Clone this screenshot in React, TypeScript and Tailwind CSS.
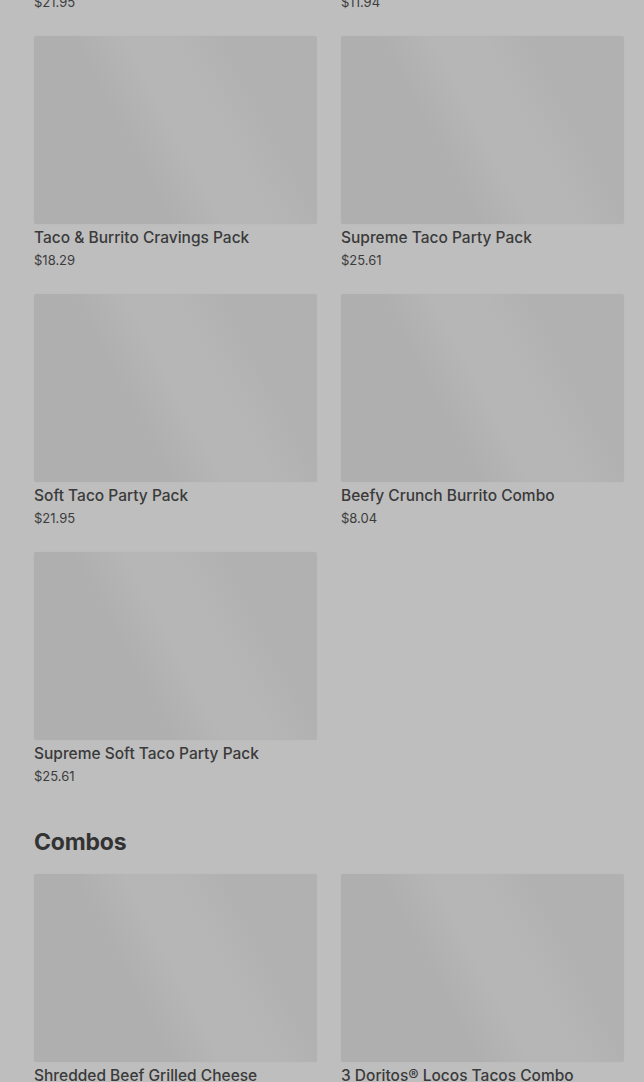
import React from "react";

type Item = { name: string; price: string };

const Skeleton = () => (
  <div className="h-[188px] w-full rounded-[2px] bg-[linear-gradient(62deg,#afafaf_0%,#afafaf_36%,#b6b6b6_50%,#b6b6b6_62%,#b1b1b1_76%,#b1b1b1_100%)] shadow-[0_0_1px_rgba(0,0,0,0.08)]" />
);

const Card = ({ item }: { item: Item }) => (
  <div className="flex flex-col">
    <Skeleton />
    <div className="mt-[2px] pr-[12px] text-[15.5px] leading-[24px] font-medium text-[#3a3a3a] font-['Inter',sans-serif]">
      {item.name}
    </div>
    <div className="text-[13px] leading-[20px] text-[#3c3c3c] font-['Inter',sans-serif]">
      {item.price}
    </div>
  </div>
);

const packs: Item[] = [
  { name: "Taco & Burrito Cravings Pack", price: "$18.29" },
  { name: "Supreme Taco Party Pack", price: "$25.61" },
  { name: "Soft Taco Party Pack", price: "$21.95" },
  { name: "Beefy Crunch Burrito Combo", price: "$8.04" },
  { name: "Supreme Soft Taco Party Pack", price: "$25.61" },
];

const combos: Item[] = [
  { name: "Shredded Beef Grilled Cheese Burrito Combo", price: "$9.49" },
  { name: "3 Doritos® Locos Tacos Combo", price: "$8.99" },
];

export default function App() {
  return (
    <div className="h-[1082px] w-[644px] overflow-hidden bg-[#bebebe] pl-[34px] pr-[20px] font-['Inter',sans-serif]">
      <div className="-mt-[8px] grid grid-cols-2 gap-x-[24px]">
        <div className="text-[13px] leading-[20px] text-[#3c3c3c]">$21.95</div>
        <div className="text-[13px] leading-[20px] text-[#3c3c3c]">$11.94</div>
      </div>
      <div className="mt-[24px] grid grid-cols-2 gap-x-[24px] gap-y-[24px]">
        {packs.map((p) => (
          <Card key={p.name} item={p} />
        ))}
      </div>
      <h2 className="mt-[40px] text-[23px] leading-[32px] font-bold text-[#333333] tracking-[-0.2px]">
        Combos
      </h2>
      <div className="mt-[16px] grid grid-cols-2 gap-x-[24px] gap-y-[24px]">
        {combos.map((p) => (
          <Card key={p.name} item={p} />
        ))}
      </div>
    </div>
  );
}
